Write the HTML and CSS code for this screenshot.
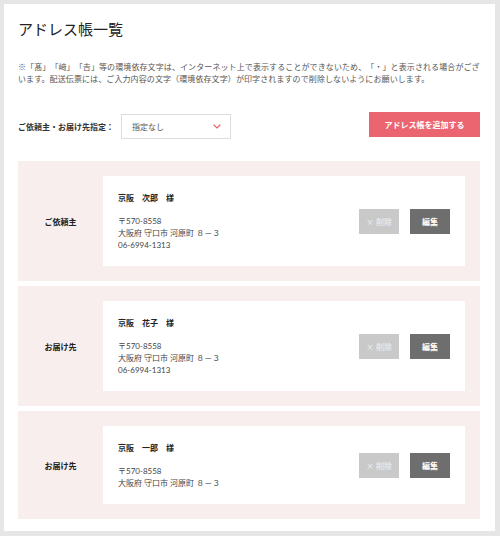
FILE: index.html
```html
<!DOCTYPE html>
<html lang="ja">
<head>
  <meta charset="utf-8">
  <title>アドレス帳一覧</title>
  <link rel="stylesheet" href="styles.css">
</head>
<body>
  <div class="page">
    <h1 class="page-title">アドレス帳一覧</h1>
    <p class="notice">※「髙」「﨑」「𠮷」等の環境依存文字は、インターネット上で表示することができないため、「・」と表示される場合がございます。配送伝票には、ご入力内容の文字（環境依存文字）が印字されますので削除しないようにお願いします。</p>

    <div class="toolbar">
      <div class="filter">
        <span class="filter-label">ご依頼主・お届け先指定：</span>
        <div class="select">
          <span>指定なし</span>
          <svg class="chevron" width="8" height="5" viewBox="0 0 8 5">
            <path d="M0.7 0.7 L4 3.9 L7.3 0.7" fill="none" stroke="#e8646c" stroke-width="1.3"/>
          </svg>
        </div>
      </div>
      <button class="btn-add">アドレス帳を追加する</button>
    </div>

    <div class="address-list">
      <div class="address-card">
        <div class="card-type">ご依頼主</div>
        <div class="card-body">
          <div class="address-info">
            <p class="address-name">京阪　次郎　様</p>
            <p class="address-line">〒570-8558</p>
            <p class="address-line">大阪府 守口市 河原町 ８－３</p>
            <p class="address-line">06-6994-1313</p>
          </div>
          <div class="card-actions">
            <button class="btn-delete"><span class="cross">×</span> 削除</button>
            <button class="btn-edit">編集</button>
          </div>
        </div>
      </div>

      <div class="address-card">
        <div class="card-type">お届け先</div>
        <div class="card-body">
          <div class="address-info">
            <p class="address-name">京阪　花子　様</p>
            <p class="address-line">〒570-8558</p>
            <p class="address-line">大阪府 守口市 河原町 ８－３</p>
            <p class="address-line">06-6994-1313</p>
          </div>
          <div class="card-actions">
            <button class="btn-delete"><span class="cross">×</span> 削除</button>
            <button class="btn-edit">編集</button>
          </div>
        </div>
      </div>

      <div class="address-card">
        <div class="card-type">お届け先</div>
        <div class="card-body">
          <div class="address-info">
            <p class="address-name">京阪　一郎　様</p>
            <p class="address-line">〒570-8558</p>
            <p class="address-line">大阪府 守口市 河原町 ８－３</p>
          </div>
          <div class="card-actions">
            <button class="btn-delete"><span class="cross">×</span> 削除</button>
            <button class="btn-edit">編集</button>
          </div>
        </div>
      </div>
    </div>
  </div>
</body>
</html>
```

FILE: styles.css
```css
* {
    box-sizing: border-box;
}

body {
    margin: 0;
    padding: 4px;
    background: #e6e6e6;
    font-family: Lato, "Noto Sans CJK JP", sans-serif;
    color: #333;
    text-spacing-trim: space-all;
}

.page {
    width: 491px;
    background: #fff;
    padding: 14px 15px 12px 14px;
}

.page-title {
    margin: 0;
    font-size: 15px;
    line-height: 22px;
    font-weight: normal;
    color: #222;
}

.notice {
    margin: 22px 0 0;
    font-size: 8px;
    line-height: 11.5px;
    letter-spacing: 0.1px;
    color: #555;
}

.toolbar {
    display: flex;
    justify-content: space-between;
    align-items: flex-start;
    margin-top: 27px;
}

.filter {
    display: flex;
    align-items: center;
    margin-top: 2px;
}

.filter-label {
    font-size: 8px;
    font-weight: bold;
    color: #333;
    margin-right: 7px;
}

.select {
    width: 110px;
    height: 25px;
    border: 1px solid #ddd;
    display: flex;
    align-items: center;
    justify-content: space-between;
    padding: 0 9px 0 10px;
    font-size: 8px;
    color: #555;
}

.btn-add {
    width: 111px;
    height: 25px;
    border: none;
    background: #eb6570;
    color: #fff;
    font-family: inherit;
    font-size: 8px;
    font-weight: bold;
    cursor: pointer;
}

.address-list {
    margin-top: 22px;
    display: flex;
    flex-direction: column;
    gap: 5px;
}

.address-card {
    display: flex;
    background: #f8eeee;
    padding: 15px 15px 15px 0;
}

.card-type {
    width: 85px;
    flex-shrink: 0;
    display: flex;
    align-items: center;
    justify-content: center;
    font-size: 8px;
    font-weight: bold;
    color: #222;
}

.card-body {
    flex: 1;
    background: #fff;
    display: flex;
    align-items: center;
    justify-content: space-between;
    padding: 16px 15px 15px;
}

.address-info p {
    margin: 0;
}

.address-name {
    font-size: 8px;
    line-height: 12px;
    font-weight: bold;
    color: #222;
    margin-bottom: 11px !important;
}

.address-line {
    font-size: 8px;
    line-height: 12px;
    color: #444;
}

.card-actions {
    display: flex;
    gap: 11px;
}

.card-actions button {
    width: 40px;
    height: 25px;
    border: none;
    font-family: inherit;
    font-size: 8px;
    cursor: pointer;
}

.cross {
    font-family: "Noto Sans CJK JP", sans-serif;
}

.btn-delete {
    background: #c9c9c9;
    color: #f2f2f2;
}

.btn-edit {
    background: #6e6e6e;
    color: #fff;
    font-weight: bold;
}
```
